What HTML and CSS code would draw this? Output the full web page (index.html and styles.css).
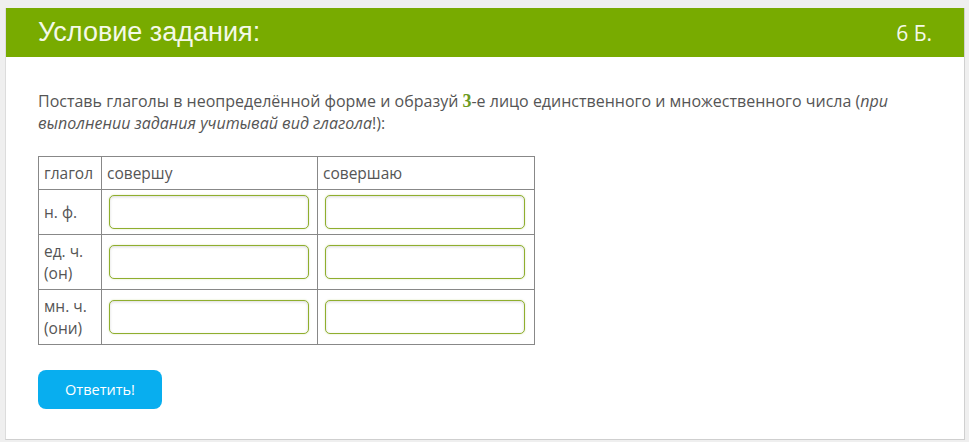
FILE: index.html
```html
<!DOCTYPE html>
<html lang="ru">
<head>
<meta charset="utf-8">
<title>Условие задания</title>
<link rel="stylesheet" href="styles.css">
</head>
<body>
<div class="card">
  <div class="card-head">
    <h1 class="title">Условие задания:</h1>
    <span class="points">6 Б.</span>
  </div>
  <div class="card-body">
    <p class="task">Поставь глаголы в неопределённой форме и образуй <b class="num">3</b>-е лицо единственного и множественного числа (<i>при выполнении задания учитывай вид глагола</i>!):</p>
    <table class="grid">
      <tr>
        <td class="c1">глагол</td>
        <td class="c2">совершу</td>
        <td class="c3">совершаю</td>
      </tr>
      <tr>
        <td class="c1">н. ф.</td>
        <td class="cin"><input class="field" type="text"></td>
        <td class="cin"><input class="field" type="text"></td>
      </tr>
      <tr>
        <td class="c1">ед. ч.<br>(он)</td>
        <td class="cin"><input class="field" type="text"></td>
        <td class="cin"><input class="field" type="text"></td>
      </tr>
      <tr>
        <td class="c1">мн. ч.<br>(они)</td>
        <td class="cin"><input class="field" type="text"></td>
        <td class="cin"><input class="field" type="text"></td>
      </tr>
    </table>
    <button class="answer" type="button">Ответить!</button>
  </div>
</div>
</body>
</html>
```
FILE: styles.css
```css
html, body {
  margin: 0;
  padding: 0;
}
body {
  background: #efefef;
  padding: 8px 4px 0 5px;
  font-family: "Open Sans", "Noto Sans", sans-serif;
  color: #555;
}
.card {
  background: #fff;
  border-left: 1px solid #dcdcdc;
  border-right: 1px solid #d0d0d0;
  border-bottom: 1px solid #cfcfcf;
  height: 432px;
  box-sizing: border-box;
}
.card-head {
  background: #78ab00;
  height: 49px;
  display: flex;
  align-items: center;
  justify-content: space-between;
  padding: 0 32px 0 32px;
}
.title {
  margin: 0;
  font-family: "Liberation Sans", Arial, sans-serif;
  font-weight: normal;
  font-size: 27px;
  color: #f4f9e8;
}
.points {
  font-family: "Open Sans", sans-serif;
  font-size: 21px;
  color: #f4f9e8;
}
.card-body {
  padding: 33px 32px 0 32px;
}
.task {
  margin: 0 0 22px 0;
  font-size: 16px;
  line-height: 22px;
  color: #555;
}
.num {
  font-family: "Liberation Serif", "Times New Roman", serif;
  font-weight: bold;
  font-size: 18px;
  line-height: 16px;
  color: #6b9a22;
}
.grid {
  border-collapse: collapse;
  font-size: 15.5px;
  line-height: 22px;
  color: #555;
}
.grid td {
  border: 1px solid #888;
  padding: 5px 5px;
  vertical-align: middle;
  text-align: left;
}
.c1 {
  width: 52px;
}
.c2 {
  width: 205px;
}
.c3 {
  width: 206px;
}
.grid td.cin {
  padding: 5px 7px 5px 7px;
}
.field {
  display: block;
  box-sizing: border-box;
  width: 200px;
  height: 34px;
  margin: 0;
  border: 1px solid #8fae2e;
  border-radius: 5px;
  box-shadow: inset 0 1px 3px rgba(0, 0, 0, 0.15), 0 0 2px rgba(140, 180, 40, 0.35);
  background: #fff;
}
.answer {
  margin-top: 25px;
  width: 124px;
  height: 39px;
  border: none;
  border-radius: 8px;
  background: #08aeef;
  color: #fff;
  font-family: "Open Sans", sans-serif;
  font-size: 14.5px;
}
```
